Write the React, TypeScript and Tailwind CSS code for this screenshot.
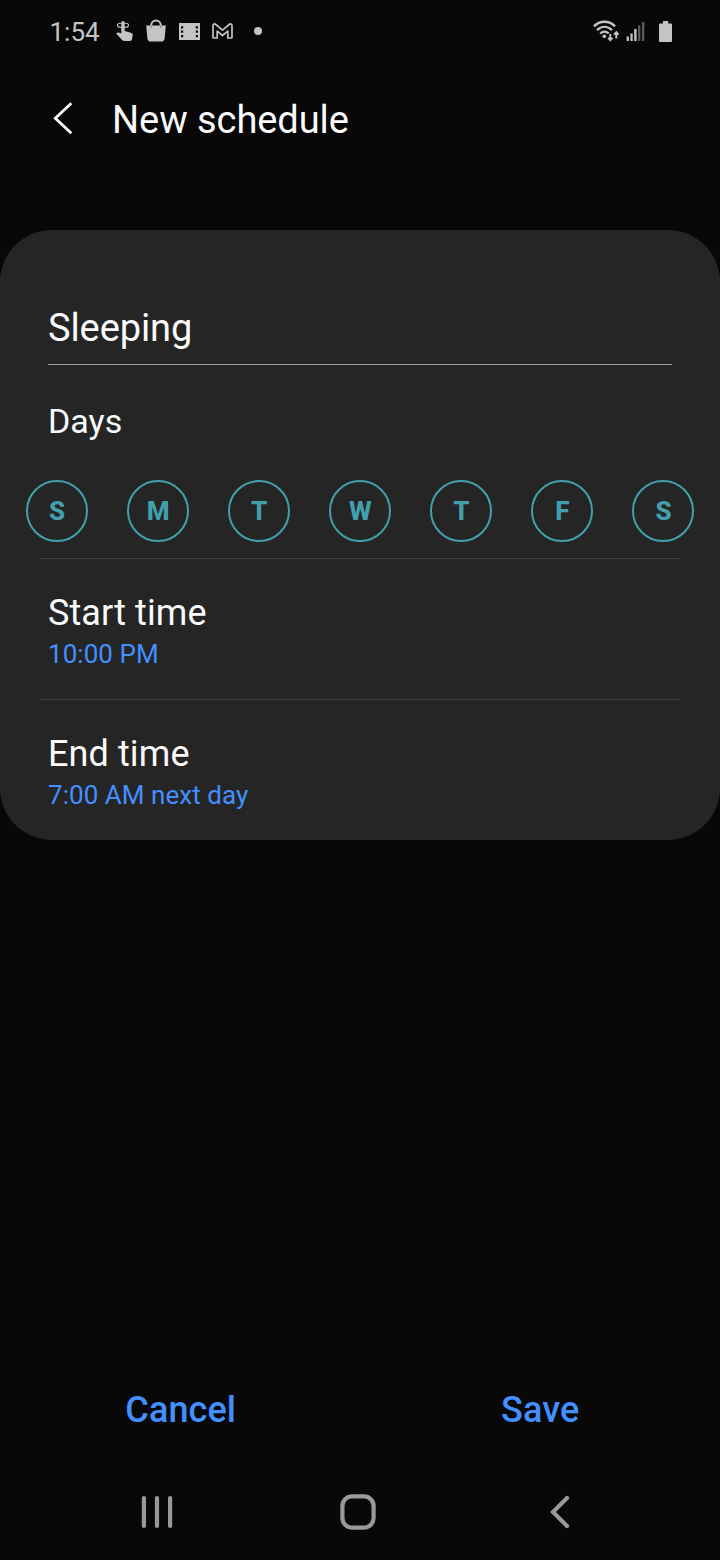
import { useState } from 'react'

const DAYS = ['S', 'M', 'T', 'W', 'T', 'F', 'S']

function TouchIcon() {
  return (
    <svg width="20" height="24" viewBox="0 0 20 24" fill="none">
      <path
        d="M5.3 3.6a1.7 1.7 0 0 1 3.4 0V12l6.2 1.8c1.4.4 2 1.2 1.8 2.5l-.6 3.8c-.2 1.3-1 1.9-2.1 1.9H8.4c-.9 0-1.6-.3-2.2-1L.3 14.8l.7-.8c.5-.5 1-.6 1.7-.4l2.6.9z"
        fill="#c4c4c4"
      />
      <ellipse cx="4.2" cy="6.3" rx="2.7" ry="2" stroke="#c4c4c4" strokeWidth="1.1" />
      <ellipse cx="9.8" cy="6.3" rx="2.7" ry="2" stroke="#c4c4c4" strokeWidth="1.1" />
    </svg>
  )
}

function BagIcon() {
  return (
    <svg width="20" height="24" viewBox="0 0 20 24" fill="none">
      <path d="M5.2 8.5V6.3a4.8 4.8 0 0 1 9.6 0v2.2" stroke="#c4c4c4" strokeWidth="2" />
      <path d="M.2 6.6h19.6l-1.2 12.8c-.2 2-1.4 3.1-3.4 3.1H4.8c-2 0-3.2-1.1-3.4-3.1z" fill="#c4c4c4" />
      <path d="M5.2 6.6v2.6M14.8 6.6v2.6" stroke="#7a7a7a" strokeWidth="1" />
    </svg>
  )
}

function FilmIcon() {
  return (
    <svg width="21" height="17" viewBox="0 0 21 17">
      <path d="M0 0h21v17H0z" fill="#c4c4c4" />
      <path
        d="M2 3.2h2.2v2.2H2zM2 7.6h2.2v2.2H2zM2 12h2.2v2.2H2zM16.8 3.2H19v2.2h-2.2zM16.8 7.6H19v2.2h-2.2zM16.8 12H19v2.2h-2.2z"
        fill="#090909"
      />
    </svg>
  )
}

function MailIcon() {
  return (
    <svg width="21" height="16" viewBox="0 0 21 16" fill="none">
      <path
        d="M1 14.2V2.6C1 1 2.6.5 3.8 1.5l6.7 5.6 6.7-5.6C18.4.5 20 1 20 2.6v11.6c0 .5-.3.8-.8.8h-3.4V8.2l-5.3 4.3-5.3-4.3V15H1.8c-.5 0-.8-.3-.8-.8z"
        stroke="#c4c4c4"
        strokeWidth="1.7"
        strokeLinejoin="round"
      />
    </svg>
  )
}

function WifiIcon() {
  return (
    <svg width="27" height="22" viewBox="0 0 27 22" fill="none">
      <g stroke="#c4c4c4" strokeWidth="2.3">
        <path d="M.9 6.4c6-6.2 15.2-6.2 21.2 0" />
        <path d="M4 10.1c4.6-4.4 10.4-4.4 15 0" />
        <path d="M7.2 13.5c2.7-2.4 5.9-2.4 8.6 0" />
      </g>
      <circle cx="11.3" cy="16.2" r="1.8" fill="#c4c4c4" />
      <path d="M17.3 14v6M15.1 17.8l2.2 2.4 2.2-2.4M23.3 18.4v-6M21.1 14.6l2.2-2.4 2.2 2.4" stroke="#c4c4c4" strokeWidth="1.9" />
    </svg>
  )
}

function SignalIcon() {
  return (
    <svg width="19" height="20" viewBox="0 0 19 20">
      <path d="M.6 15.6h2.3V20H.6zM4.4 12.4h2.3V20H4.4zM8.2 8h2.4v12H8.2z" fill="#c4c4c4" />
      <path d="M12.1 4.2h2.3V20h-2.3zM16 1h2.3v19H16z" fill="#5c5c5c" />
    </svg>
  )
}

function BatteryIcon() {
  return (
    <svg width="13" height="21" viewBox="0 0 13 21">
      <path d="M4 0h5.2v2.4h2.9c.6 0 .9.3.9.9v16.8c0 .6-.3.9-.9.9H.9c-.6 0-.9-.3-.9-.9V3.3c0-.6.3-.9.9-.9H4z" fill="#c4c4c4" />
    </svg>
  )
}

function StatusBar() {
  return (
    <div className="flex h-16 items-center justify-between pr-12 pl-[49.5px] text-[#c4c4c4]">
      <div className="flex items-center">
        <span className="w-[66.5px] text-[26px] leading-8">1:54</span>
        <div className="flex items-center pb-[2px]">
          <TouchIcon />
          <div className="ml-[10px]">
            <BagIcon />
          </div>
          <div className="ml-[13px]">
            <FilmIcon />
          </div>
          <div className="ml-3">
            <MailIcon />
          </div>
          <div className="ml-[21px] size-2 rounded-full bg-[#c4c4c4]" />
        </div>
      </div>
      <div className="flex items-center pb-[2px]">
        <WifiIcon />
        <div className="ml-[6px]">
          <SignalIcon />
        </div>
        <div className="ml-[14px]">
          <BatteryIcon />
        </div>
      </div>
    </div>
  )
}

function TimeRow({ label, value }: { label: string; value: string }) {
  return (
    <button type="button" className="block h-[140px] w-full px-12 pt-8 pb-[26px] text-left">
      <div className="text-[36px] leading-[44px] tracking-[0.1px] text-[#fafafa]">{label}</div>
      <div className="text-[26px] leading-[38px] tracking-[0.04px] text-[#438fff]">{value}</div>
    </button>
  )
}

export default function App() {
  const [name, setName] = useState('Sleeping')

  return (
    <div className="flex h-[1560px] w-[720px] flex-col overflow-hidden bg-[#080808] font-['Roboto',sans-serif]">
      <StatusBar />

      {/* Header */}
      <header className="flex h-28 items-center pl-[52px]">
        <svg width="22" height="34" viewBox="0 0 22 34" fill="none" className="mb-1">
          <path d="M19.3 2.2 3.3 17.3l16 15" stroke="#fafafa" strokeWidth="2.8" />
        </svg>
        <h1 className="ml-[38px] text-[38px] leading-[48px] tracking-[-0.06px] text-[#fafafa]">New schedule</h1>
      </header>

      {/* Schedule card */}
      <main className="mt-[54px] h-[610px] rounded-[52px] bg-[#252525]">
        <div className="px-12 pt-[62px]">
          <input
            type="text"
            value={name}
            onChange={(e) => setName(e.target.value)}
            className="block h-[73px] w-full border-b border-[#a0a0a0] pb-0 text-[38px] leading-[72px] tracking-[-0.1px] text-[#fafafa] outline-none"
          />
          <h2 className="mt-[34px] text-[34px] leading-[44px] text-[#fafafa]">Days</h2>
        </div>

        <div className="mt-[37px] flex justify-between pr-[25.5px] pl-[26px]">
          {DAYS.map((day, i) => (
            <button
              key={i}
              type="button"
              className="flex size-[62px] items-center justify-center rounded-full border-2 border-[#429fad] text-[26px] leading-8 font-extrabold text-[#429fad]"
            >
              {day}
            </button>
          ))}
        </div>

        <div className="mx-10 mt-4 h-px bg-[#414141]" />
        <TimeRow label="Start time" value="10:00 PM" />
        <div className="mx-10 h-px bg-[#414141]" />
        <TimeRow label="End time" value="7:00 AM next day" />
      </main>

      {/* Actions */}
      <div className="mt-auto grid grid-cols-2 pl-px text-[36px] leading-[60px] font-medium tracking-[0.1px] text-[#438fff]">
        <button type="button">Cancel</button>
        <button type="button">Save</button>
      </div>

      {/* Navigation bar */}
      <nav className="mt-6 grid h-24 grid-cols-3 items-center justify-items-center pr-[59px] pl-14">
        <svg width="32" height="34" viewBox="0 0 32 34" fill="none">
          <path d="M2.9 3v28M16 3v28M29.1 3v28" stroke="#999" strokeWidth="4.2" strokeLinecap="round" />
        </svg>
        <svg width="36" height="36" viewBox="0 0 36 36" fill="none">
          <rect x="2.4" y="2.4" width="31.2" height="31.2" rx="9.5" stroke="#999" strokeWidth="4.2" />
        </svg>
        <svg width="20" height="34" viewBox="0 0 20 34" fill="none">
          <path d="M17 3 3 17l14 14" stroke="#999" strokeWidth="4.2" strokeLinecap="round" />
        </svg>
      </nav>
    </div>
  )
}
